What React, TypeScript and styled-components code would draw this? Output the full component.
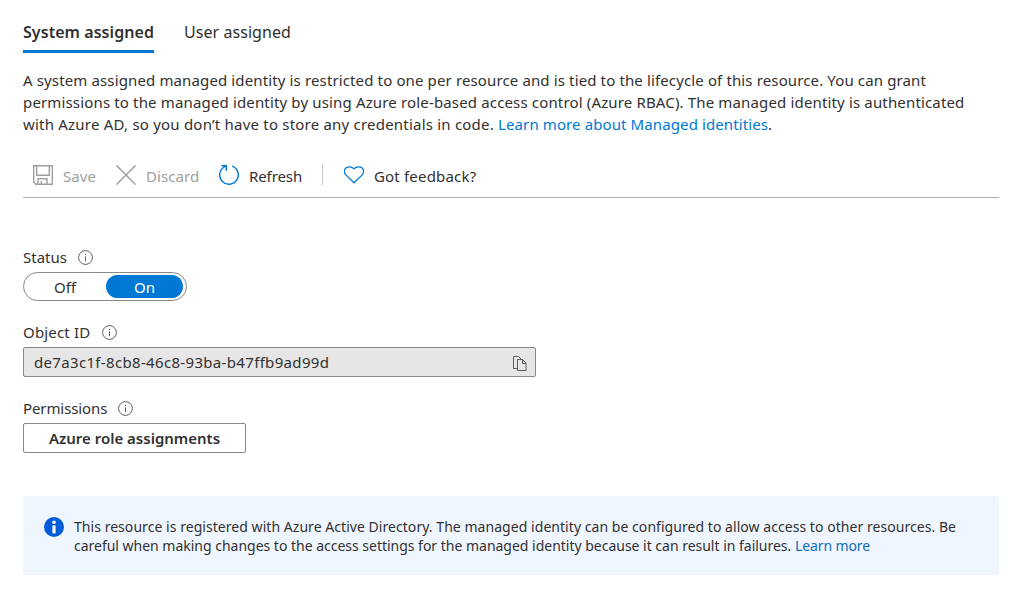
import React from 'react';
import styled, { createGlobalStyle } from 'styled-components';

const GlobalStyle = createGlobalStyle`
  * { box-sizing: border-box; }
  body {
    margin: 0;
    background: #fff;
    color: #323130;
    font: 15px/20px "Noto Sans", "Open Sans", sans-serif;
  }
  button { font: inherit; color: inherit; margin: 0; cursor: pointer; }
  svg { display: block; flex: none; }
`;

const Page = styled.main`
  width: 1021px;
  height: 593px;
  padding: 17px 22px 0 23px;
  overflow: hidden;
`;

const Tabs = styled.nav`
  display: flex;
  gap: 30px;
  height: 36px;
`;

const Tab = styled.button<{ $active?: boolean }>`
  height: 36px;
  padding: 0 0 3px;
  border: 0;
  border-bottom: 3px solid ${p => (p.$active ? '#0078d4' : 'transparent')};
  background: none;
  font-size: 16px;
  line-height: 30px;
  font-weight: ${p => (p.$active ? 600 : 400)};
  letter-spacing: 0.06px;
  white-space: nowrap;
`;

const Text = styled.span<{ $track?: number }>`
  letter-spacing: ${p => p.$track ?? 0}px;
  white-space: nowrap;
`;

const Link = styled.a<{ $track?: number; $color?: string }>`
  color: ${p => p.$color ?? '#0078d4'};
  letter-spacing: ${p => p.$track ?? 0}px;
  cursor: pointer;
`;

const Description = styled.p`
  margin: 16px 0 0;
  line-height: 22px;
`;

const Toolbar = styled.div`
  display: flex;
  align-items: center;
  height: 46px;
  margin-top: 17px;
  padding: 2px 0 0 10px;
  border-bottom: 1px solid #b3b0ad;
`;

const Command = styled.button<{ $width: number }>`
  display: flex;
  align-items: center;
  gap: 10px;
  width: ${p => p.$width}px;
  height: 32px;
  padding: 0;
  border: 0;
  background: none;
  &:disabled { color: #a19f9d; cursor: default; }
  svg { margin-top: -1px; }
`;

const Divider = styled.span`
  width: 1px;
  height: 21px;
  margin: -2px 21px 0 0;
  background: #c8c6c4;
`;

const Field = styled.section<{ $top: number }>`
  margin-top: ${p => p.$top}px;
`;

const Label = styled.div<{ $gap?: number }>`
  display: flex;
  align-items: center;
  gap: ${p => p.$gap ?? 11}px;
  height: 20px;
  margin-bottom: 5px;
`;

const Toggle = styled.div`
  display: flex;
  width: 164px;
  height: 29px;
  padding: 2px 3px 2px 2px;
  border: 1px solid #8a8886;
  border-radius: 15px;
`;

const Option = styled.button<{ $on?: boolean }>`
  width: ${p => (p.$on ? 77 : 80)}px;
  height: 23px;
  padding: ${p => (p.$on ? '0' : '0 2px 0 0')};
  border: 0;
  border-radius: 12px;
  line-height: 24px;
  color: ${p => (p.$on ? '#fff' : '#323130')};
  background: ${p => (p.$on ? '#0078d4' : 'transparent')};
`;

const IdBox = styled.div`
  display: flex;
  align-items: center;
  justify-content: space-between;
  width: 513px;
  height: 30px;
  padding: 0 8px 0 10px;
  border: 1px solid #8a8886;
  border-radius: 2px;
  background: #e6e6e6;
  svg { margin-top: 4px; }
`;

const RoleButton = styled.button`
  width: 223px;
  height: 30px;
  padding: 0;
  border: 1px solid #8a8886;
  border-radius: 2px;
  background: #fff;
  font-weight: 600;
  line-height: 28px;
`;

const Notice = styled.aside`
  display: flex;
  gap: 10px;
  height: 79px;
  margin-top: 43px;
  padding: 21px 20px 0 21px;
  border-radius: 3px;
  background: #f0f6ff;
  font-size: 14px;
  line-height: 19px;
`;

const InfoIcon = () => (
  <svg width="15" height="15" viewBox="0 0 15 15" fill="none" stroke="#605e5c">
    <circle cx="7.5" cy="7.5" r="6.9" />
    <path d="M7.5 6.3v4.9M7.5 3.8v1.2" />
  </svg>
);

const SaveIcon = () => (
  <svg width="20" height="20" viewBox="0 0 20 20" fill="none" stroke="#a19f9d" strokeWidth="1.4">
    <path d="M.7.7h18.6v18.6H2.8L.7 17.2zM3.7.7v9.6h12.6V.7M5 19.3v-5.6h9v5.6M8.3 19.3V16" />
  </svg>
);

const DiscardIcon = () => (
  <svg width="20" height="20" viewBox="0 0 20 20" fill="none" stroke="#a19f9d" strokeWidth="1.5">
    <path d="m.4.4 19.2 19.2M19.6.4.4 19.6" />
  </svg>
);

const RefreshIcon = () => (
  <svg width="20" height="20" viewBox="0 0 20 20" fill="none" stroke="#0078d4" strokeWidth="1.4">
    <path d="M13.1 1.2A9.3 9.3 0 1 1 5.2 2L7.3.8M2.4.8h4.9v4.9" />
  </svg>
);

const HeartIcon = () => (
  <svg width="20" height="18" viewBox="0 0 20 18" fill="none" stroke="#0078d4" strokeWidth="1.3">
    <path d="M10 16.8 2.1 9.1C-1.5 5.1 1 .8 5.3.8 7.7.8 9 1.5 10 2.8 11 1.5 12.3.8 14.7.8c4.3 0 6.8 4.3 3.2 8.3z" />
  </svg>
);

const CopyIcon = () => (
  <svg width="14" height="16" viewBox="0 0 14 16" fill="none" stroke="#605e5c">
    <path d="M4 12.5H.5V.5h5l3 3M4.5 3.5h5l3.5 3.7v7.3H4.5zM9.5 3.5v4H13" />
  </svg>
);

const NoticeIcon = () => (
  <svg width="20" height="20" viewBox="0 0 20 20">
    <circle cx="10" cy="10" r="10" fill="#015cda" />
    <circle cx="10" cy="5.2" r="1.8" fill="#fff" />
    <path d="M8.4 8.4h3.2v8H8.4z" fill="#fff" />
  </svg>
);

export default function App() {
  return (
    <>
      <GlobalStyle />
      <Page>
        <Tabs>
          <Tab $active>System assigned</Tab>
          <Tab>User assigned</Tab>
        </Tabs>

        <Description>
          <Text $track={0.13}>
            A system assigned managed identity is restricted to one per resource and is tied to the lifecycle of this resource. You can grant
          </Text>
          <br />
          <Text $track={0.152}>
            permissions to the managed identity by using Azure role-based access control (Azure RBAC). The managed identity is authenticated
          </Text>
          <br />
          <Text $track={0.21}>with Azure AD, so you don’t have to store any credentials in code. </Text>
          <Link $track={0.106}>Learn more about Managed identities</Link>.
        </Description>

        <Toolbar>
          <Command $width={83} disabled>
            <SaveIcon />
            <Text $track={0.1}>Save</Text>
          </Command>
          <Command $width={103} disabled>
            <DiscardIcon />
            <Text $track={0.1}>Discard</Text>
          </Command>
          <Command $width={103}>
            <RefreshIcon />
            <Text $track={-0.1}>Refresh</Text>
          </Command>
          <Divider />
          <Command $width={140}>
            <HeartIcon />
            <Text $track={0.18}>Got feedback?</Text>
          </Command>
        </Toolbar>

        <Field $top={49}>
          <Label>
            <Text>Status</Text>
            <InfoIcon />
          </Label>
          <Toggle>
            <Option>Off</Option>
            <Option $on>On</Option>
          </Toggle>
        </Field>

        <Field $top={21}>
          <Label $gap={12}>
            <Text $track={0.17}>Object ID</Text>
            <InfoIcon />
          </Label>
          <IdBox>
            <Text $track={0.33}>de7a3c1f-8cb8-46c8-93ba-b47ffb9ad99d</Text>
            <CopyIcon />
          </IdBox>
        </Field>

        <Field $top={21}>
          <Label>
            <Text $track={-0.1}>Permissions</Text>
            <InfoIcon />
          </Label>
          <RoleButton>Azure role assignments</RoleButton>
        </Field>

        <Notice>
          <NoticeIcon />
          <div>
            <Text $track={0.047}>
              This resource is registered with Azure Active Directory. The managed identity can be configured to allow access to other resources. Be
            </Text>
            <br />
            <Text $track={-0.013}>
              careful when making changes to the access settings for the managed identity because it can result in failures.{' '}
            </Text>
            <Link $track={-0.1} $color="#0f6cbd">Learn more</Link>
          </div>
        </Notice>
      </Page>
    </>
  );
}
